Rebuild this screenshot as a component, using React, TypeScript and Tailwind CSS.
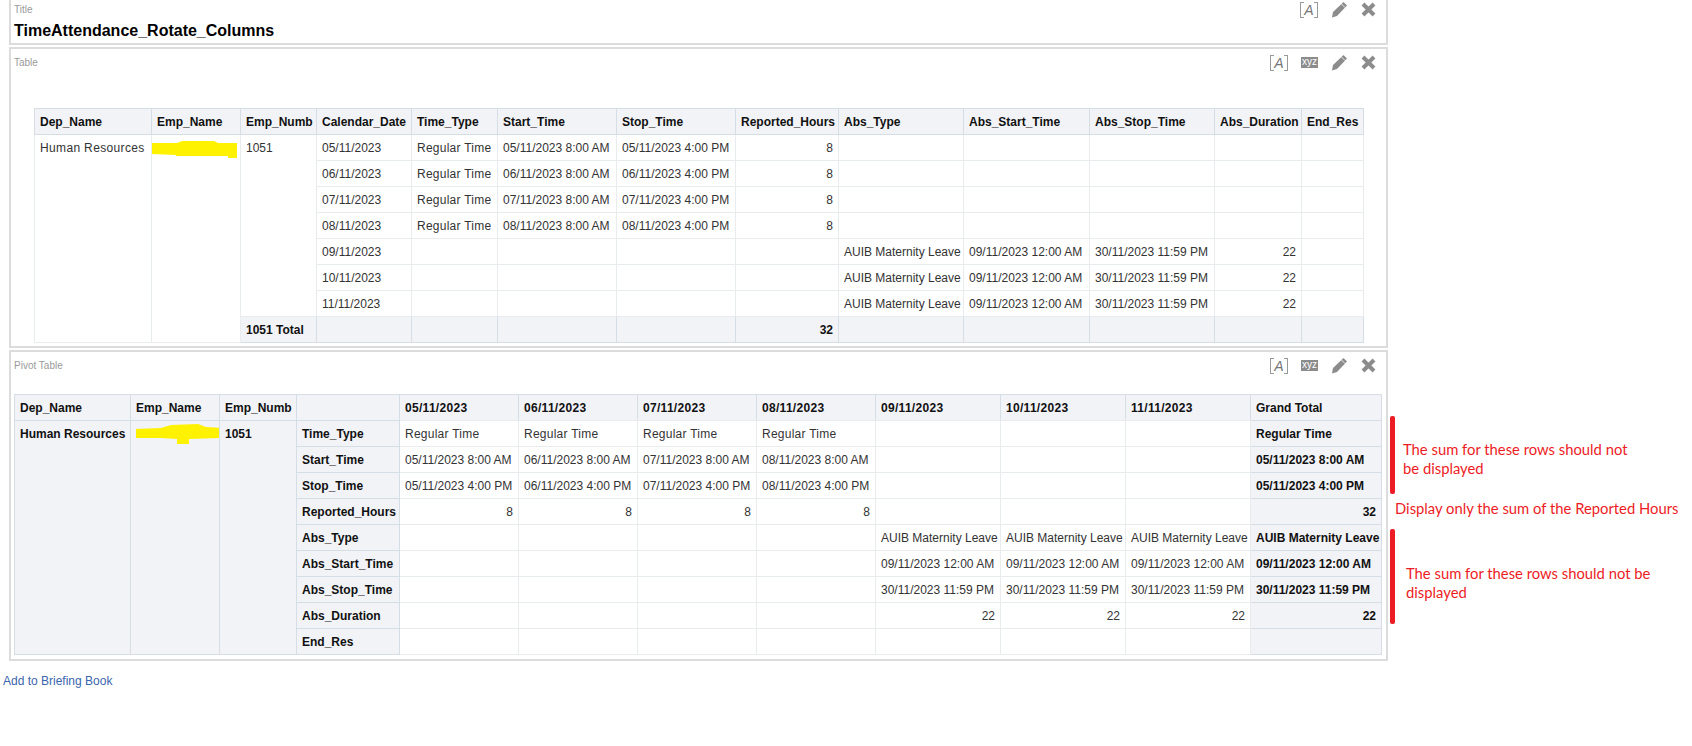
import React from "react";

const th = "border border-[#d6dee5] bg-[#f1f3f7] px-[5px] text-left font-bold text-[#111] whitespace-nowrap overflow-hidden";
const td = "border border-[#e8ecef] bg-white px-[5px] text-[#333] whitespace-nowrap overflow-hidden";
const lab = "border border-[#d6dee5] bg-[#f1f3f7] px-[5px] font-bold text-[#111] whitespace-nowrap overflow-hidden";

function TextIcon() {
  return (
    <span className="relative block h-[16px] w-[18px] text-center text-[14px] leading-[16px] italic text-[#777]">
      <span className="absolute left-0 top-0 h-full w-[4px] border-y border-l border-[#999]" />
      <span className="absolute right-0 top-0 h-full w-[4px] border-y border-r border-[#999]" />
      A
    </span>
  );
}

function XyzIcon() {
  return <span className="block h-[11px] w-[17px] bg-[#8c8c8c] text-center text-[10px] leading-[10px] text-white">xyz</span>;
}

function Pencil() {
  return (
    <svg width="17" height="17" viewBox="0 0 17 17" className="block">
      <path d="M12.5 1 L16 4.5 L6 15 L1 16.5 L2 11 Z" fill="#8c8c8c" />
      <path d="M10.5 3 L14 6.5" stroke="#fff" strokeWidth="0.8" />
    </svg>
  );
}

function Close() {
  return (
    <svg width="15" height="15" viewBox="0 0 15 15" className="block">
      <path d="M2 2 L13 13 M13 2 L2 13" stroke="#8c8c8c" strokeWidth="4" />
    </svg>
  );
}

function Blob({ points, w, h }: { points: string; w: number; h: number }) {
  return (
    <svg width={w} height={h} viewBox={`0 0 ${w} ${h}`} className="block">
      <polygon points={points} fill="#fff200" />
    </svg>
  );
}

const detail = [
  ["05/11/2023", "Regular Time", "05/11/2023 8:00 AM", "05/11/2023 4:00 PM", "8", "", "", "", "", ""],
  ["06/11/2023", "Regular Time", "06/11/2023 8:00 AM", "06/11/2023 4:00 PM", "8", "", "", "", "", ""],
  ["07/11/2023", "Regular Time", "07/11/2023 8:00 AM", "07/11/2023 4:00 PM", "8", "", "", "", "", ""],
  ["08/11/2023", "Regular Time", "08/11/2023 8:00 AM", "08/11/2023 4:00 PM", "8", "", "", "", "", ""],
  ["09/11/2023", "", "", "", "", "AUIB Maternity Leave", "09/11/2023 12:00 AM", "30/11/2023 11:59 PM", "22", ""],
  ["10/11/2023", "", "", "", "", "AUIB Maternity Leave", "09/11/2023 12:00 AM", "30/11/2023 11:59 PM", "22", ""],
  ["11/11/2023", "", "", "", "", "AUIB Maternity Leave", "09/11/2023 12:00 AM", "30/11/2023 11:59 PM", "22", ""],
];

const pivotDates = ["05/11/2023", "06/11/2023", "07/11/2023", "08/11/2023", "09/11/2023", "10/11/2023", "11/11/2023"];

const pivot: { label: string; right?: boolean; cells: string[]; total: string }[] = [
  { label: "Time_Type", cells: ["Regular Time", "Regular Time", "Regular Time", "Regular Time", "", "", ""], total: "Regular Time" },
  { label: "Start_Time", cells: ["05/11/2023 8:00 AM", "06/11/2023 8:00 AM", "07/11/2023 8:00 AM", "08/11/2023 8:00 AM", "", "", ""], total: "05/11/2023 8:00 AM" },
  { label: "Stop_Time", cells: ["05/11/2023 4:00 PM", "06/11/2023 4:00 PM", "07/11/2023 4:00 PM", "08/11/2023 4:00 PM", "", "", ""], total: "05/11/2023 4:00 PM" },
  { label: "Reported_Hours", right: true, cells: ["8", "8", "8", "8", "", "", ""], total: "32" },
  { label: "Abs_Type", cells: ["", "", "", "", "AUIB Maternity Leave", "AUIB Maternity Leave", "AUIB Maternity Leave"], total: "AUIB Maternity Leave" },
  { label: "Abs_Start_Time", cells: ["", "", "", "", "09/11/2023 12:00 AM", "09/11/2023 12:00 AM", "09/11/2023 12:00 AM"], total: "09/11/2023 12:00 AM" },
  { label: "Abs_Stop_Time", cells: ["", "", "", "", "30/11/2023 11:59 PM", "30/11/2023 11:59 PM", "30/11/2023 11:59 PM"], total: "30/11/2023 11:59 PM" },
  { label: "Abs_Duration", right: true, cells: ["", "", "", "", "22", "22", "22"], total: "22" },
  { label: "End_Res", cells: ["", "", "", "", "", "", ""], total: "" },
];

function DetailTable() {
  return (
    <table className="table-fixed border-collapse w-[1329px] text-[12px] leading-none">
      <colgroup>
        <col className="w-[117px]" />
        <col className="w-[89px]" />
        <col className="w-[76px]" />
        <col className="w-[95px]" />
        <col className="w-[86px]" />
        <col className="w-[119px]" />
        <col className="w-[119px]" />
        <col className="w-[103px]" />
        <col className="w-[125px]" />
        <col className="w-[126px]" />
        <col className="w-[125px]" />
        <col className="w-[87px]" />
        <col className="w-[62px]" />
      </colgroup>
      <thead>
        <tr className="h-[26px]">
          {["Dep_Name", "Emp_Name", "Emp_Numb", "Calendar_Date", "Time_Type", "Start_Time", "Stop_Time", "Reported_Hours", "Abs_Type", "Abs_Start_Time", "Abs_Stop_Time", "Abs_Duration", "End_Res"].map((h) => (
            <th key={h} className={th}>{h}</th>
          ))}
        </tr>
      </thead>
      <tbody>
        {detail.map((r, i) => (
          <tr key={r[0]} className="h-[26px]">
            {i === 0 && (
              <>
                <td rowSpan={8} className={`${td} align-top pt-[7px] tracking-[0.35px]`}>Human Resources</td>
                <td rowSpan={8} className={`${td} align-top pt-[6px] !px-0`}>
                  <Blob w={86} h={17} points="0,2 25,2 30,0 62,0 66,2 85,2 85,17 76,17 76,15 24,15 24,14 0,13" />
                </td>
                <td rowSpan={7} className={`${td} align-top pt-[7px]`}>1051</td>
              </>
            )}
            {r.map((c, j) => (
              <td key={j} className={`${td} ${j === 4 || j === 8 ? "text-right" : ""} ${c === "Regular Time" ? "tracking-[0.25px]" : ""}`}>{c}</td>
            ))}
          </tr>
        ))}
        <tr className="h-[26px]">
          <td className={lab}>1051 Total</td>
          <td className={lab} />
          <td className={lab} />
          <td className={lab} />
          <td className={lab} />
          <td className={`${lab} text-right`}>32</td>
          <td className={lab} />
          <td className={lab} />
          <td className={lab} />
          <td className={lab} />
          <td className={lab} />
        </tr>
      </tbody>
    </table>
  );
}

function PivotTable() {
  return (
    <table className="table-fixed border-collapse w-[1367px] text-[12px] leading-none">
      <colgroup>
        <col className="w-[116px]" />
        <col className="w-[89px]" />
        <col className="w-[77px]" />
        <col className="w-[103px]" />
        <col className="w-[119px]" />
        <col className="w-[119px]" />
        <col className="w-[119px]" />
        <col className="w-[119px]" />
        <col className="w-[125px]" />
        <col className="w-[125px]" />
        <col className="w-[125px]" />
        <col className="w-[131px]" />
      </colgroup>
      <thead>
        <tr className="h-[26px]">
          <th className={th}>Dep_Name</th>
          <th className={th}>Emp_Name</th>
          <th className={th}>Emp_Numb</th>
          <th className={th} />
          {pivotDates.map((d) => (
            <th key={d} className={`${th} tracking-[0.3px] !border-b-[#e8ecef]`}>{d}</th>
          ))}
          <th className={th}>Grand Total</th>
        </tr>
      </thead>
      <tbody>
        {pivot.map((r, i) => (
          <tr key={r.label} className="h-[26px]">
            {i === 0 && (
              <>
                <td rowSpan={9} className={`${lab} align-top pt-[7px]`}>Human Resources</td>
                <td rowSpan={9} className={`${lab} align-top pt-[3px] !pr-0`}>
                  <Blob w={85} h={21} points="0,5 25,4 35,1 62,0 70,3 85,4 85,14 53,15 53,20 41,20 41,15 25,14 0,14" />
                </td>
                <td rowSpan={9} className={`${lab} align-top pt-[7px]`}>1051</td>
              </>
            )}
            <td className={lab}>{r.label}</td>
            {r.cells.map((c, j) => (
              <td key={j} className={`${td} ${r.right ? "text-right" : ""} ${c === "Regular Time" ? "tracking-[0.25px]" : ""}`}>{c}</td>
            ))}
            <td className={`${lab} ${r.right ? "text-right" : ""}`}>{r.total}</td>
          </tr>
        ))}
      </tbody>
    </table>
  );
}

function Notes() {
  return (
    <div className="flex flex-col pt-[416px] text-[14.8px] leading-[19px] text-[#ed1c24] font-['Lato',sans-serif]">
      <div className="flex h-[78px] items-center">
        <div className="h-full w-[5px] rounded-[2px] bg-[#ed1c24]" />
        <p className="ml-[8px] mt-[8px] w-[235px]">The sum for these rows should not be displayed</p>
      </div>
      <p className="h-[35px] whitespace-nowrap pl-[5px] leading-[28px]">Display only the sum of the Reported Hours</p>
      <div className="flex h-[95px] items-center">
        <div className="h-full w-[5px] rounded-[2px] bg-[#ed1c24]" />
        <p className="ml-[11px] mt-[13px] w-[262px]">The sum for these rows should not be displayed</p>
      </div>
    </div>
  );
}

export default function App() {
  return (
    <div className="flex h-[746px] w-[1692px] overflow-hidden bg-white font-['Liberation_Sans',Arial,sans-serif]">
      <div className="w-[1390px] shrink-0 pl-[9px] pr-[2px]">
        {/* title */}
        <section className="h-[45px] border-2 border-t-0 border-[#dcdcdc]">
          <div className="flex items-start justify-between">
            <span className="ml-[3px] mt-[4px] text-[10px] leading-[12px] text-[#9a9a9a]">Title</span>
            <div className="mr-[10px] flex items-center gap-[13px] pt-[1px]">
              <TextIcon />
              <Pencil />
              <Close />
            </div>
          </div>
          <h1 className="ml-[3px] mt-[3px] text-[16px] leading-[20px] font-bold text-black">TimeAttendance_Rotate_Columns</h1>
        </section>

        {/* table */}
        <section className="mt-[2px] h-[301px] border-2 border-[#dcdcdc]">
          <div className="flex items-start justify-between">
            <span className="ml-[3px] mt-[8px] text-[10px] leading-[12px] text-[#9a9a9a]">Table</span>
            <div className="mr-[10px] flex items-center gap-[13px] pt-[5px]">
              <TextIcon />
              <XyzIcon />
              <Pencil />
              <Close />
            </div>
          </div>
          <div className="pl-[23px] pt-[37px]">
            <DetailTable />
          </div>
        </section>

        {/* pivot */}
        <section className="mt-[2px] h-[311px] border-2 border-[#dcdcdc]">
          <div className="flex items-start justify-between">
            <span className="ml-[3px] mt-[8px] text-[10px] leading-[12px] text-[#9a9a9a]">Pivot Table</span>
            <div className="mr-[10px] flex items-center gap-[13px] pt-[5px]">
              <TextIcon />
              <XyzIcon />
              <Pencil />
              <Close />
            </div>
          </div>
          <div className="pl-[3px] pt-[20px]">
            <PivotTable />
          </div>
        </section>

        <a className="-ml-[6px] mt-[13px] block text-[12px] leading-[14px] text-[#3a66ad]">Add to Briefing Book</a>
      </div>
      <Notes />
    </div>
  );
}
